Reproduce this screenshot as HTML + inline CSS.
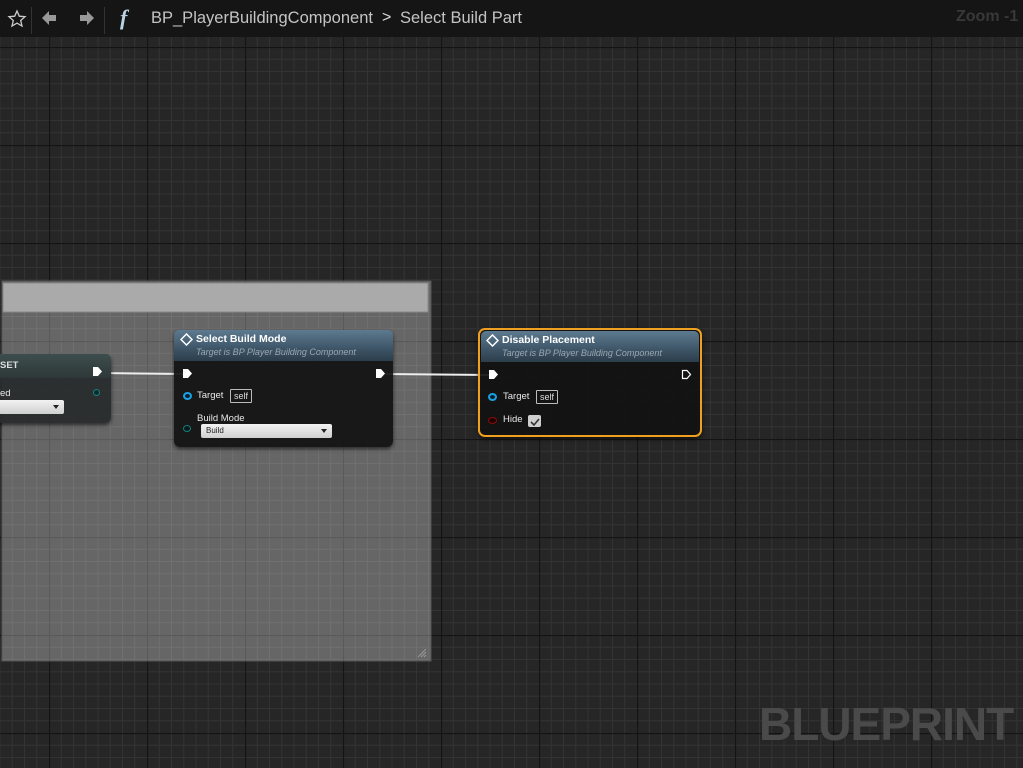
<!DOCTYPE html>
<html><head><meta charset="utf-8"><style>
*{margin:0;padding:0;box-sizing:border-box}
body{width:1023px;height:768px;overflow:hidden;background:#262626;font-family:"Liberation Sans",sans-serif;position:relative}
.abs{position:absolute}
.node{position:absolute;background:rgba(18,18,18,0.93);border-radius:6px;box-shadow:0 2px 4px rgba(0,0,0,.6)}
.hdr{position:absolute;left:0;right:0;top:0;height:31px;border-radius:5px 5px 0 0;background:linear-gradient(180deg,#5d7a90 0%,#3e5567 60%,#2c3e4c 100%)}
.title{position:absolute;left:22px;top:3px;color:#fff;font-size:10.5px;font-weight:bold}
.sub{position:absolute;left:22px;top:17px;color:#9aa7b0;font-size:9px;font-style:italic}
.lbl{position:absolute;color:#e8e8e8;font-size:9.5px}
.self{position:absolute;border:1px solid #bbb;color:#ddd;font-size:9px;padding:0 3px;height:14px;line-height:12px;border-radius:1px}
.drop{position:absolute;background:linear-gradient(#f2f2f2,#cfcfcf);border-radius:2px;color:#222;font-size:8px;padding-left:5px;line-height:14px;height:14px}
.drop:after{content:"";position:absolute;right:5px;top:5px;border-left:3.5px solid transparent;border-right:3.5px solid transparent;border-top:4px solid #222}
</style></head><body>
<svg class="abs" style="left:0;top:0" width="1023" height="768">
<defs>
<pattern id="g" x="49" y="47" width="98" height="98" patternUnits="userSpaceOnUse">
<g stroke="#333" stroke-width="1">
<path d="M12.25 0V98M24.5 0V98M36.75 0V98M49 0V98M61.25 0V98M73.5 0V98M85.75 0V98M0 12.25H98M0 24.5H98M0 36.75H98M0 49H98M0 61.25H98M0 73.5H98M0 85.75H98"/>
</g>
<path d="M0.5 0V98M0 0.5H98" stroke="#141414" stroke-width="1.2"/>
</pattern>
<pattern id="g2" x="49" y="47" width="98" height="98" patternUnits="userSpaceOnUse">
<g stroke="#707070" stroke-width="1">
<path d="M12.25 0V98M24.5 0V98M36.75 0V98M49 0V98M61.25 0V98M73.5 0V98M85.75 0V98M0 12.25H98M0 24.5H98M0 36.75H98M0 49H98M0 61.25H98M0 73.5H98M0 85.75H98"/>
</g>
<path d="M0.5 0V98M0 0.5H98" stroke="#5a5a5a" stroke-width="1.2"/>
</pattern>
</defs>
<rect width="1023" height="768" fill="#262626"/>
<rect width="1023" height="768" fill="url(#g)"/>
<rect x="2" y="281" width="429" height="380" fill="#666"/>
<rect x="2" y="281" width="429" height="380" fill="url(#g2)"/>
<rect x="2" y="281" width="429" height="380" fill="none" stroke="#555" stroke-width="1"/>
<rect x="3" y="283" width="425" height="29" fill="#aaa" stroke="#888"/>
<path d="M418 657l8-8M421 657l5-5M424 657l2-2" stroke="#999" stroke-width="1"/>
<path d="M100 373 L186 374" stroke="#eee" stroke-width="2"/>
<path d="M383 374 L490 375" stroke="#eee" stroke-width="2"/>
</svg>

<div class="abs" style="left:0;top:0;width:1023px;height:37px;background:#151515"></div>
<div class="abs" style="left:31px;top:7px;width:1px;height:27px;background:#333"></div>
<div class="abs" style="left:104px;top:7px;width:1px;height:27px;background:#333"></div>
<svg class="abs" style="left:7px;top:9px" width="20" height="20"><path d="M10 2l2.3 5.2 5.7.5-4.3 3.8 1.3 5.5L10 14.1 5 17l1.3-5.5L2 7.7l5.7-.5z" fill="none" stroke="#ccc" stroke-width="1.3"/></svg>
<svg class="abs" style="left:40px;top:9px" width="18" height="18"><path d="M2 9L9 2V6H16V12H9V16Z" fill="#999"/></svg>
<svg class="abs" style="left:78px;top:9px" width="18" height="18"><path d="M16 9L9 2V6H2V12H9V16Z" fill="#999"/></svg>
<div class="abs" style="left:120px;top:5px;color:#b9d3e6;font-family:'Liberation Serif',serif;font-style:italic;font-weight:bold;font-size:22px">f</div>
<div class="abs" style="left:151px;top:9px;color:#c4c4c4;font-size:16.5px">BP_PlayerBuildingComponent</div>
<div class="abs" style="left:382px;top:9px;color:#ddd;font-size:16px">&gt;</div>
<div class="abs" style="left:400px;top:9px;color:#c4c4c4;font-size:16.5px">Select Build Part</div>
<div class="abs" style="left:956px;top:8px;color:#383838;font-size:16px;font-weight:bold">Zoom -1</div>

<!-- SET node -->
<div class="node" style="left:-10px;top:354px;width:121px;height:69px;background:rgba(40,44,44,.95)">
<div class="abs" style="left:0;right:0;top:0;height:24px;border-radius:5px 5px 0 0;background:linear-gradient(#3d4d4d,#2e3838)"></div>
<div class="lbl" style="left:10px;top:6px;font-weight:bold;color:#ddd">SET</div>
<svg class="abs" style="left:102px;top:12px" width="12" height="12"><path d="M1 1H6L10 5.5L6 10H1Z" fill="#fff"/></svg>
<div class="lbl" style="left:10px;top:34px">ed</div>
<div class="abs" style="left:103px;top:35px;width:7px;height:7px;border-radius:50%;background:#0b2b2b;border:1px solid #1a8080"></div>
<div class="drop" style="left:0;top:46px;width:74px"></div>
</div>

<!-- Select Build Mode -->
<div class="node" style="left:174px;top:330px;width:219px;height:117px">
<div class="hdr"></div>
<svg class="abs" style="left:6px;top:3px" width="13" height="13"><path d="M6.5 1L12 6.5 6.5 12 1 6.5Z" fill="none" stroke="#fff" stroke-width="1.5"/></svg>
<div class="title">Select Build Mode</div>
<div class="sub">Target is BP Player Building Component</div>
<svg class="abs" style="left:8px;top:38px" width="12" height="12"><path d="M1 1H6L10 5.5L6 10H1Z" fill="#fff"/></svg>
<svg class="abs" style="left:201px;top:38px" width="12" height="12"><path d="M1 1H6L10 5.5L6 10H1Z" fill="#fff"/></svg>
<div class="abs" style="left:9px;top:62px;width:9px;height:8px;border-radius:50%;border:2px solid #1aa0e0;background:#0a2030"></div>
<div class="lbl" style="left:23px;top:60px">Target</div>
<div class="self" style="left:56px;top:59px">self</div>
<div class="lbl" style="left:23px;top:83px">Build Mode</div>
<div class="abs" style="left:9px;top:95px;width:8px;height:7px;border-radius:50%;border:1.5px solid #15807a;background:#0a1a1a"></div>
<div class="drop" style="left:27px;top:94px;width:131px">Build</div>
</div>

<!-- Disable Placement -->
<div class="node" style="left:478px;top:328px;width:224px;height:109px;border:2px solid #f0a020;border-radius:7px">
<div class="hdr" style="left:1px;right:1px;top:1px"></div>
<svg class="abs" style="left:6px;top:4px" width="13" height="13"><path d="M6.5 1L12 6.5 6.5 12 1 6.5Z" fill="none" stroke="#fff" stroke-width="1.5"/></svg>
<div class="title" style="top:4px">Disable Placement</div>
<div class="sub" style="top:18px">Target is BP Player Building Component</div>
<svg class="abs" style="left:8px;top:39px" width="12" height="12"><path d="M1 1H6L10 5.5L6 10H1Z" fill="#fff"/></svg>
<svg class="abs" style="left:201px;top:39px" width="12" height="12"><path d="M1.5 1.5H6L9.5 5.5L6 9.5H1.5Z" fill="none" stroke="#fff" stroke-width="1.2"/></svg>
<div class="abs" style="left:8px;top:63px;width:9px;height:8px;border-radius:50%;border:2px solid #1aa0e0;background:#0a2030"></div>
<div class="lbl" style="left:23px;top:61px">Target</div>
<div class="self" style="left:56px;top:60px">self</div>
<div class="abs" style="left:8px;top:87px;width:9px;height:7px;border-radius:50%;border:1.5px solid #8a0c0c;background:#200"></div>
<div class="lbl" style="left:23px;top:84px">Hide</div>
<div class="abs" style="left:48px;top:85px;width:13px;height:12px;background:#cfcfcf;border-radius:2px"><svg width="13" height="12"><path d="M3 6l3 3 5-6" fill="none" stroke="#333" stroke-width="1.6"/></svg></div>
</div>

<div class="abs" style="left:759px;top:696px;color:#4a4a4a;font-size:46px;font-weight:bold;letter-spacing:-1px;line-height:56px;transform:scaleX(1.0);transform-origin:left top">BLUEPRINT</div>
</body></html>
